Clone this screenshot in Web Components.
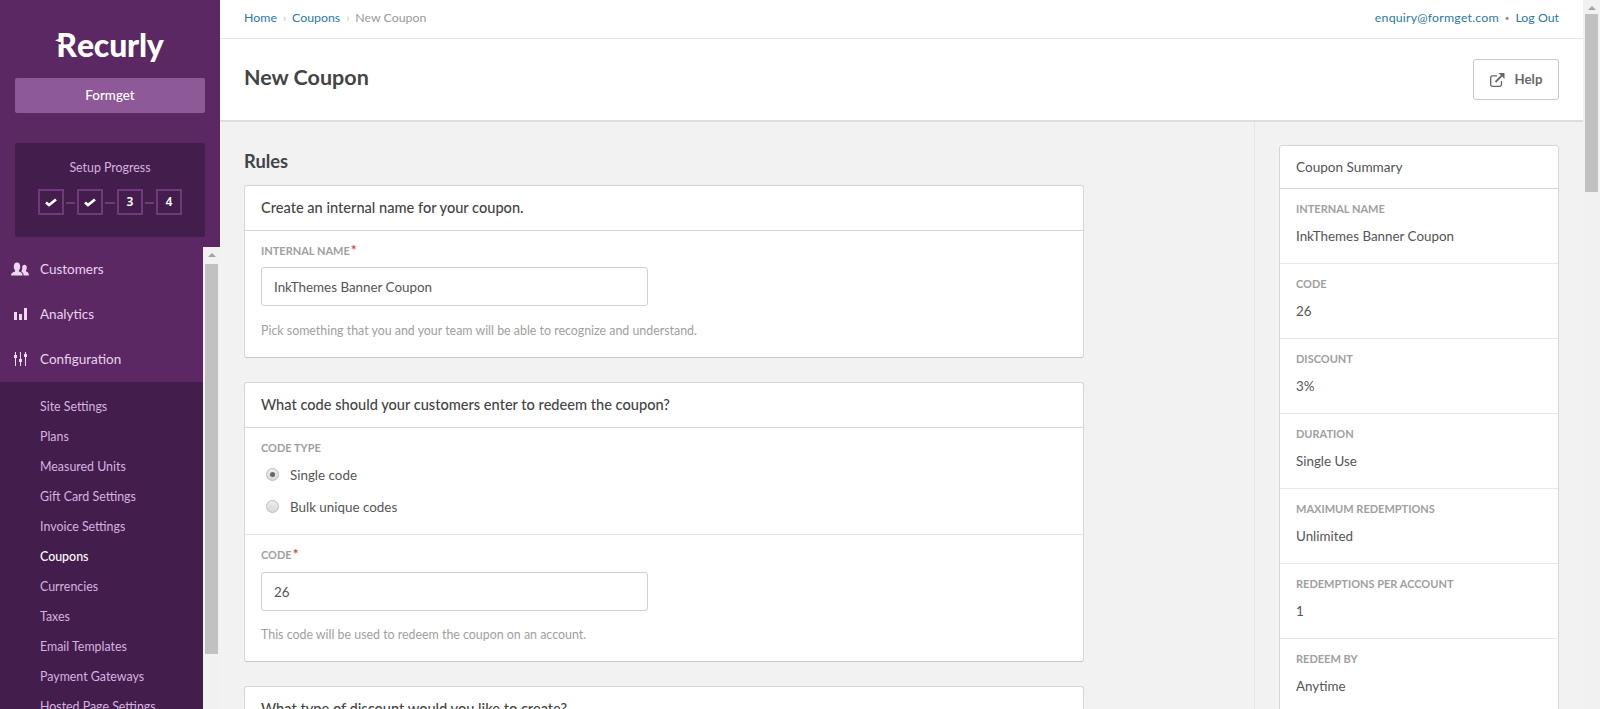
<!DOCTYPE html>
<html>
<head>
<meta charset="utf-8">
<title>New Coupon</title>
<style>
  html, body { height: 100%; }
  body {
    margin: 0;
    display: flex;
    height: 709px;
    overflow: hidden;
    background: #f2f2f2;
    font-family: Lato, "Noto Sans", sans-serif;
    font-size: 13px;
    color: #555;
  }
</style>
</head>
<body>
  <side-bar>
    <nav-item slot="nav" icon="customers">Customers</nav-item>
    <nav-item slot="nav" icon="analytics">Analytics</nav-item>
    <nav-item slot="nav" icon="config">Configuration</nav-item>
    <sub-item slot="sub">Site Settings</sub-item>
    <sub-item slot="sub">Plans</sub-item>
    <sub-item slot="sub">Measured Units</sub-item>
    <sub-item slot="sub">Gift Card Settings</sub-item>
    <sub-item slot="sub">Invoice Settings</sub-item>
    <sub-item slot="sub" active>Coupons</sub-item>
    <sub-item slot="sub">Currencies</sub-item>
    <sub-item slot="sub">Taxes</sub-item>
    <sub-item slot="sub">Email Templates</sub-item>
    <sub-item slot="sub">Payment Gateways</sub-item>
    <sub-item slot="sub">Hosted Page Settings</sub-item>
  </side-bar>

  <main-area>
    <top-bar></top-bar>
    <page-header>New Coupon</page-header>
    <page-body>
      <h2 slot="heading" style="margin:0;font:700 18.3px/20px Lato,sans-serif;color:#444;">Rules</h2>

      <form-panel slot="form" title="Create an internal name for your coupon.">
        <form-field label="Internal Name" required hint="Pick something that you and your team will be able to recognize and understand.">InkThemes Banner Coupon</form-field>
      </form-panel>

      <form-panel slot="form" title="What code should your customers enter to redeem the coupon?">
        <radio-group label="Code Type">
          <radio-item checked>Single code</radio-item>
          <radio-item>Bulk unique codes</radio-item>
        </radio-group>
        <form-field label="Code" required divided hint="This code will be used to redeem the coupon on an account.">26</form-field>
      </form-panel>

      <form-panel slot="form" title="What type of discount would you like to create?"></form-panel>

      <summary-panel slot="aside" title="Coupon Summary">
        <summary-row label="Internal Name">InkThemes Banner Coupon</summary-row>
        <summary-row label="Code">26</summary-row>
        <summary-row label="Discount">3%</summary-row>
        <summary-row label="Duration">Single Use</summary-row>
        <summary-row label="Maximum Redemptions">Unlimited</summary-row>
        <summary-row label="Redemptions Per Account">1</summary-row>
        <summary-row label="Redeem By">Anytime</summary-row>
      </summary-panel>
    </page-body>
  </main-area>

  <scroll-bar offset="14" size="178"></scroll-bar>

<script>
const FONT = 'Lato, "Noto Sans", sans-serif';

const ICONS = {
  customers: `<svg width="18" height="14" viewBox="0 0 18 14"><path fill="currentColor" d="M0 13.500c0-2.400 1.600-3 3.400-3.700.9-.4 1-1 .6-1.600C3.100 7.200 2.800 6 2.800 4.500 2.800 2 4 .4 6 .4S9.200 2 9.200 4.500c0 1.500-.3 2.700-1.200 3.700-.4.600-.3 1.200.6 1.600 1.800.7 3 1.300 3 3.700z"/><path fill="currentColor" d="M12.600 13.500c0-2.300-.9-3.300-2.300-4.100.1-.4.200-.5.600-1 .5-.9.300-2.300.3-3.100 0-1.600 1-2.600 2.300-2.600s2.300 1 2.300 2.800c0 1.100-.2 2.200-.9 3-.3.400-.2.800.4 1.100 1.400.6 2.600 1.200 2.600 3.900z"/></svg>`,
  analytics: `<svg width="13" height="12" viewBox="0 0 13 12"><path fill="currentColor" d="M0 4h3v8H0zM5 6h3v6H5zM10 0h3v12h-3z"/></svg>`,
  config: `<svg width="13" height="14" viewBox="0 0 13 14"><path fill="currentColor" d="M1 0h1v3H1zM0 3h3v3H0zM1 6h1v8H1zM6 0h1v7H6zM5 7h3v3H5zM6 10h1v4H6zM11 0h1v2h-1zM10 2h3v3h-3zM11 5h1v9h-1z"/></svg>`,
  check: `<svg width="12" height="9" viewBox="0 0 12 9"><path fill="none" stroke="#fff" stroke-width="2.700" d="M1 4.500l3 2.600L11 1.500"/></svg>`,
  external: `<svg width="15" height="14" viewBox="0 0 15 14"><path fill="none" stroke="#666" stroke-width="1.300" d="M11.500 8v3.500c0 1-.6 1.800-1.600 1.800H2.400c-1 0-1.700-.8-1.700-1.800V4.600c0-1 .7-1.700 1.700-1.700H7"/><path fill="none" stroke="#666" stroke-width="1.800" d="M5.500 9L12 2.300"/><path fill="#666" d="M8.500 0H14.500V6z"/></svg>`
};

class ScrollBar extends HTMLElement {
  constructor() {
    super();
    const offset = this.getAttribute('offset');
    const size = this.getAttribute('size');
    this.attachShadow({ mode: 'open' }).innerHTML = `
      <style>
        :host { display: block; flex: none; width: 17px; background: #f1f1f1; position: relative; }
        .arrow {
          position: absolute; top: 6px; left: 5px; width: 0; height: 0;
          border: 4px solid transparent; border-top: 0; border-bottom: 4px solid #a3a3a3;
        }
        .thumb { width: 13px; margin: 0 2px; height: ${size}px; background: #c1c1c1; }
        .gap { height: ${offset}px; }
      </style>
      <div class="arrow"></div>
      <div class="gap"></div>
      <div class="thumb"></div>`;
  }
}
customElements.define('scroll-bar', ScrollBar);

const sideTemplate = document.createElement('template');
sideTemplate.innerHTML = `
  <style>
    :host {
      display: flex; flex-direction: column; flex: none; width: 220px; height: 709px;
      background: #5b2863; overflow: hidden;
    }
    .logo {
      height: 78px; display: flex; justify-content: center; align-items: center;
      color: #fff; font: 900 32px/1 ${FONT}; letter-spacing: -.2px; padding-top: 12px;
      box-sizing: border-box;
    }
    .logo span { position: relative; display: inline-block; }
    .logo svg { position: absolute; left: -1px; top: 3px; }
    .account {
      margin: 0 15px; height: 35px; border-radius: 2px; background: #8d5a97; padding-bottom: 1px; box-sizing: border-box;
      display: flex; align-items: center; justify-content: center;
      color: #fff; font-size: 13.400px; font-weight: 500;
    }
    .setup {
      margin: 30px 15px 10px; height: 94px; border-radius: 2px; background: #431d4b;
      display: flex; flex-direction: column; align-items: center; box-sizing: border-box; padding-top: 17px;
    }
    .setup p { margin: 0 0 13px; font-size: 12.400px; line-height: 16px; color: #d5b3e0; }
    .steps { display: flex; align-items: center; gap: 2px; }
    .steps b {
      width: 26px; height: 26px; box-sizing: border-box; border: 2px solid #6f3a79;
      display: flex; align-items: center; justify-content: center;
      color: #fff; font: 600 12px/1 "Noto Sans", sans-serif;
    }
    .steps i { width: 9px; height: 2px; background: #6f3a79; margin: 2px 0 0; }
    .steps i:nth-of-type(2) { width: 10px; }
    .scroller { flex: 1; display: flex; min-height: 0; }
    .nav { flex: 1; min-width: 0; }
    .sub { background: #431d4b; padding: 9px 0 40px; }
  </style>
  <div class="logo"><span>R<svg width="8" height="16" viewBox="0 0 8 16"><path fill="#5b2863" d="M-1 0H6C3 1 1.500 2 1 3.500L-1 5zM-1 10H6V12.200H-1z"/><path fill="#fff" d="M0 8.500L6.500 5.500V10.500z"/></svg></span>ecurly</div>
  <div class="account">Formget</div>
  <div class="setup">
    <p>Setup Progress</p>
    <div class="steps">
      <b>${ICONS.check}</b><i></i><b>${ICONS.check}</b><i></i><b>3</b><i></i><b>4</b>
    </div>
  </div>
  <div class="scroller">
    <div class="nav">
      <slot name="nav"></slot>
      <div class="sub"><slot name="sub"></slot></div>
    </div>
    <scroll-bar offset="17" size="390"></scroll-bar>
  </div>
`;
class SideBar extends HTMLElement {
  constructor() {
    super();
    this.attachShadow({ mode: 'open' });
    this.shadowRoot.appendChild(sideTemplate.content.cloneNode(true));
  }
}
customElements.define('side-bar', SideBar);

class NavItem extends HTMLElement {
  constructor() {
    super();
    this.attachShadow({ mode: 'open' }).innerHTML = `
      <style>
        :host {
          display: flex; align-items: center; height: 45px; box-sizing: border-box; padding-bottom: 1px;
          color: #e9d3ef; font-size: 13.500px;
        }
        .icon { width: 40px; flex: none; display: flex; justify-content: center; color: #edd7f2; }
      </style>
      <span class="icon">${ICONS[this.getAttribute('icon')]}</span><slot></slot>`;
  }
}
customElements.define('nav-item', NavItem);

class SubItem extends HTMLElement {
  constructor() {
    super();
    this.attachShadow({ mode: 'open' }).innerHTML = `
      <style>
        :host { display: flex; align-items: center; height: 30px; padding-left: 40px; color: #d5b3e0; font-size: 12.400px; }
        :host([active]) { color: #fff; font-weight: 500; }
      </style>
      <slot></slot>`;
  }
}
customElements.define('sub-item', SubItem);

const mainTemplate = document.createElement('template');
mainTemplate.innerHTML = `
  <style>
    :host { display: flex; flex-direction: column; flex: 1; min-width: 0; height: 709px; overflow: hidden; }
  </style>
  <slot></slot>
`;
class MainArea extends HTMLElement {
  constructor() {
    super();
    this.attachShadow({ mode: 'open' });
    this.shadowRoot.appendChild(mainTemplate.content.cloneNode(true));
  }
}
customElements.define('main-area', MainArea);

class TopBar extends HTMLElement {
  constructor() {
    super();
    this.attachShadow({ mode: 'open' }).innerHTML = `
      <style>
        :host {
          display: flex; flex: none; justify-content: space-between; align-items: center;
          height: 38px; box-sizing: content-box; padding: 0 24px; background: #fff; border-bottom: 1px solid #e8e8e8;
          font-size: 12.350px; color: #999;
        }
        div { padding-bottom: 4px; }
        a { color: #2a78a6; text-decoration: none; }
        .mail { letter-spacing: .2px; }
        .sep { color: #bbb; margin: 0 6px; font-size: 11px; }
        .dot { color: #888; margin: 0 6px; font-size: 8px; position: relative; top: -1px; }
      </style>
      <div><a>Home</a><span class="sep">›</span><a>Coupons</a><span class="sep">›</span>New Coupon</div>
      <div><a class="mail">enquiry@formget.com</a><span class="dot">•</span><a>Log Out</a></div>`;
  }
}
customElements.define('top-bar', TopBar);

class PageHeader extends HTMLElement {
  constructor() {
    super();
    this.attachShadow({ mode: 'open' }).innerHTML = `
      <style>
        :host {
          display: flex; flex: none; justify-content: space-between; align-items: center;
          height: 81px; padding: 0 24px; background: #fff; border-bottom: 2px solid #ddd;
          box-sizing: content-box;
        }
        h1 { margin: 0 0 4px; font: 700 21.500px/1 ${FONT}; color: #444; }
        button {
          display: flex; align-items: center; gap: 10px; justify-content: center;
          width: 86px; height: 41px; background: #fff; border: 1px solid #c8c8c8; border-radius: 3px;
          font: 700 13.200px/1 ${FONT}; color: #666; padding: 0;
        }
      </style>
      <h1><slot></slot></h1>
      <button>${ICONS.external}<span>Help</span></button>`;
  }
}
customElements.define('page-header', PageHeader);

const bodyTemplate = document.createElement('template');
bodyTemplate.innerHTML = `
  <style>
    :host { display: flex; flex: 1; min-height: 0; }
    .left { width: 1034px; flex: none; box-sizing: border-box; padding: 29px 0 0 24px; overflow: hidden; }
    .heading { height: 34px; }
    .forms { width: 840px; display: flex; flex-direction: column; gap: 24px; }
    .right { flex: 1; border-left: 1px solid #e6e6e6; padding: 23px 24px 0; overflow: hidden; }
  </style>
  <div class="left">
    <div class="heading"><slot name="heading"></slot></div>
    <div class="forms"><slot name="form"></slot></div>
  </div>
  <div class="right"><slot name="aside"></slot></div>
`;
class PageBody extends HTMLElement {
  constructor() {
    super();
    this.attachShadow({ mode: 'open' });
    this.shadowRoot.appendChild(bodyTemplate.content.cloneNode(true));
  }
}
customElements.define('page-body', PageBody);

class FormPanel extends HTMLElement {
  constructor() {
    super();
    this.attachShadow({ mode: 'open' }).innerHTML = `
      <style>
        :host {
          display: block; background: #fff; border: 1px solid #d6d6d6; border-bottom-color: #c8c8c8; border-radius: 3px;
        }
        header {
          box-sizing: border-box; border-bottom: 1px solid #d6d6d6; padding: 0 16px 2px; height: 45px;
          display: flex; align-items: center; font-size: 14.600px; font-weight: 500; color: #444;
        }
      </style>
      <header>${this.getAttribute('title')}</header>
      <slot></slot>`;
  }
}
customElements.define('form-panel', FormPanel);

class FormField extends HTMLElement {
  constructor() {
    super();
    const req = this.hasAttribute('required') ? '<em>*</em>' : '';
    this.attachShadow({ mode: 'open' }).innerHTML = `
      <style>
        :host { display: block; padding: 12px 16px 18px; }
        :host([divided]) { border-top: 1px solid #e8e8e8; }
        label { display: block; font-size: 11px; line-height: 16px; font-weight: 700; color: #a0a0a0; text-transform: uppercase; height: 24px; }
        :host([divided]) label { height: 25px; }
        em { color: #e4424d; font-style: normal; margin-left: 1px; font-size: 14px; line-height: 0; }
        .input {
          width: 387px; height: 39px; box-sizing: border-box; border: 1px solid #d0d0d0; border-radius: 3px;
          padding: 0 12px; display: flex; align-items: center; font-size: 13.400px; color: #555; background: #fff;
        }
        p { margin: 17px 0 0; font-size: 12.400px; line-height: 16px; color: #a0a0a0; }
        :host([divided]) p { margin-top: 16px; }
      </style>
      <label>${this.getAttribute('label')}${req}</label>
      <div class="input"><slot></slot></div>
      <p>${this.getAttribute('hint')}</p>`;
  }
}
customElements.define('form-field', FormField);

class RadioGroup extends HTMLElement {
  constructor() {
    super();
    this.attachShadow({ mode: 'open' }).innerHTML = `
      <style>
        :host { display: block; padding: 12px 16px 11px; }
        label { display: block; font-size: 11px; line-height: 16px; font-weight: 700; color: #a0a0a0; text-transform: uppercase; height: 19px; }
      </style>
      <label>${this.getAttribute('label')}</label>
      <slot></slot>`;
  }
}
customElements.define('radio-group', RadioGroup);

class RadioItem extends HTMLElement {
  constructor() {
    super();
    this.attachShadow({ mode: 'open' }).innerHTML = `
      <style>
        :host { display: flex; align-items: center; height: 32px; color: #555; font-size: 13.400px; }
        .ball {
          width: 13px; height: 13px; box-sizing: border-box; border-radius: 50%; margin: -2px 11px 0 5px; flex: none;
          border: 1px solid #bbb; background: linear-gradient(#eee, #d8d8d8);
          display: flex; align-items: center; justify-content: center;
        }
        :host([checked]) .ball::after { content: ""; width: 5px; height: 5px; border-radius: 50%; background: #666; }
      </style>
      <span class="ball"></span><slot></slot>`;
  }
}
customElements.define('radio-item', RadioItem);

class SummaryPanel extends HTMLElement {
  constructor() {
    super();
    this.attachShadow({ mode: 'open' }).innerHTML = `
      <style>
        :host { display: block; background: #fff; border: 1px solid #d6d6d6; border-radius: 3px; }
        header {
          height: 42px; border-bottom: 1px solid #d6d6d6; padding: 0 16px;
          display: flex; align-items: center; font-size: 13.600px; color: #555;
        }
      </style>
      <header>${this.getAttribute('title')}</header>
      <slot></slot>`;
  }
}
customElements.define('summary-panel', SummaryPanel);

class SummaryRow extends HTMLElement {
  constructor() {
    super();
    this.attachShadow({ mode: 'open' }).innerHTML = `
      <style>
        :host { display: block; height: 75px; box-sizing: border-box; padding: 12px 16px 0; border-bottom: 1px solid #e8e8e8; }
        label { display: block; font-size: 11px; line-height: 16px; font-weight: 700; color: #a0a0a0; text-transform: uppercase; height: 27px; }
        div { font-size: 13.400px; line-height: 16px; color: #555; }
      </style>
      <label>${this.getAttribute('label')}</label>
      <div><slot></slot></div>`;
  }
}
customElements.define('summary-row', SummaryRow);
</script>
</body>
</html>
